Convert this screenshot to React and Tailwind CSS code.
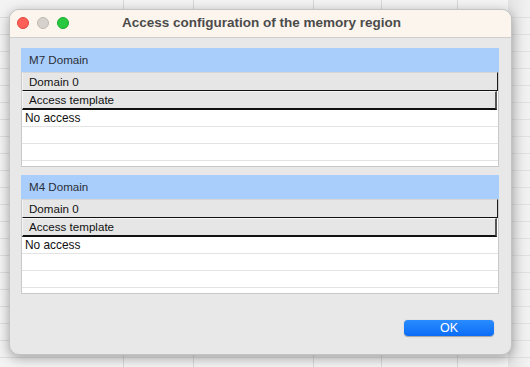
import React from "react";

function Panel({ title }) {
  return (
    <div className="flex flex-col w-[478px] h-[119px]">
      <div className="h-[24px] bg-[#a9cefc] flex items-center pl-[8px] text-[11.6px] text-[#2b2f36]">{title}</div>
      <div className="flex flex-col flex-1 border-l border-r border-b border-[#c9c9c9] bg-white overflow-hidden">
        <div className="h-[19px] shrink-0 bg-[#e6e6e6] border-t border-t-[#d6d6d6] border-r border-r-[#1a1a1a] border-b border-b-[#111] border-l border-l-[#f4f4f4] flex items-center pl-[6px] text-[11.6px] text-[#111]">Domain 0</div>
        <div className="h-[19px] shrink-0 mr-[1px] bg-[#e6e6e6] border-t border-t-[#f6f6f6] border-l border-l-[#f6f6f6] border-r-2 border-r-[#555] border-b-2 border-b-[#111] flex items-center pl-[6px] text-[11.6px] text-[#111]">Access template</div>
        <div className="h-[17px] shrink-0 border-b border-[#e3e3e3] flex items-center pl-[3px] pt-[2px] text-[11.9px] text-[#111]">No access</div>
        <div className="h-[17px] shrink-0 border-b border-[#e3e3e3]"></div>
        <div className="h-[17px] shrink-0 border-b border-[#e3e3e3]"></div>
        <div className="flex-1"></div>
      </div>
    </div>
  );
}

export default function App() {
  const rows = Array.from({ length: 22 });
  return (
    <div className="relative w-[530px] h-[367px] overflow-hidden bg-[#f3f3f3]" style={{ fontFamily: '"Liberation Sans", Arial, sans-serif' }}>
      {/* spreadsheet background */}
      <div className="absolute inset-0 flex flex-col pt-[1px]">
        {rows.map((_, i) => (
          <div key={i} className="h-[17px] shrink-0 border-b border-[#dedede]"></div>
        ))}
      </div>
      <div className="absolute top-0 bottom-0 left-[123px] w-px bg-[#d8d8d8]"></div>
      <div className="absolute top-0 bottom-0 left-[193px] w-px bg-[#d8d8d8]"></div>
      <div className="absolute top-0 bottom-0 left-[313px] w-px bg-[#d8d8d8]"></div>
      <div className="absolute top-0 bottom-0 left-[381px] w-px bg-[#d8d8d8]"></div>
      <div className="absolute top-0 bottom-0 left-[457px] w-px bg-[#d8d8d8]"></div>
      <div className="absolute top-0 bottom-0 right-0 w-[22px] bg-gradient-to-r from-[#d8d8d8]/60 to-[#efefef]/10"></div>

      {/* window */}
      <div className="absolute left-[9px] top-[9px] w-[503px] h-[346px] rounded-[10px] bg-[#e8e8e8] shadow-[0_3px_12px_rgba(0,0,0,0.35)] border border-[#c4c4c4] overflow-hidden flex flex-col">
        <div className="h-[28px] shrink-0 bg-[#fcf5ed] border-b border-[#cfcfcf] relative flex items-center justify-center">
          <div className="absolute left-[7px] top-[7px] flex gap-[8px]">
            <div className="w-[12px] h-[12px] rounded-full bg-[#fe5f57] border border-[#e2463f]"></div>
            <div className="w-[12px] h-[12px] rounded-full bg-[#d6d1cc] border border-[#bfb9b3]"></div>
            <div className="w-[12px] h-[12px] rounded-full bg-[#28c840] border border-[#1aab29]"></div>
          </div>
          <div className="text-[13.5px] font-bold text-[#4b4b4b] pl-[2px]">Access configuration of the memory region</div>
        </div>
        <div className="flex flex-col pl-[11px] pt-[10px] gap-[8px]">
          <Panel title="M7 Domain" />
          <Panel title="M4 Domain" />
        </div>
        <div className="flex justify-end pr-[17px] pt-[26px]">
          <div className="w-[90px] h-[16px] rounded-[4px] bg-gradient-to-b from-[#2a8cff] to-[#0a6cf6] flex items-center justify-center text-white text-[12.5px] shadow-[0_0.5px_1px_rgba(0,0,0,0.3)]">OK</div>
        </div>
      </div>
    </div>
  );
}
